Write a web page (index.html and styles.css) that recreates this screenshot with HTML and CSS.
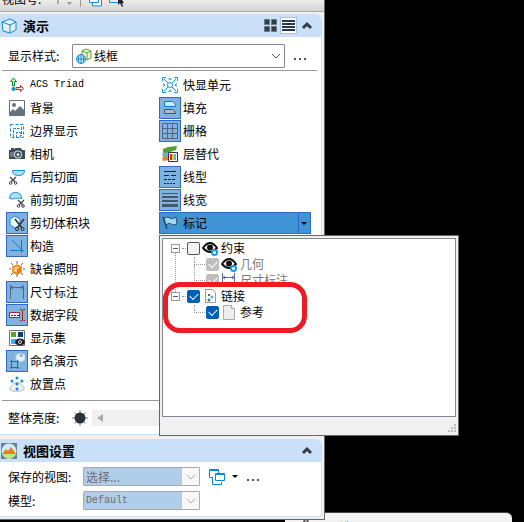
FILE: index.html
```
<!DOCTYPE html>
<html lang="zh-CN">
<head>
    <meta charset="UTF-8">
    <meta name="viewport" content="width=device-width, initial-scale=1.0">
    <title>视图属性</title>
    <link rel="stylesheet" href="styles.css">
</head>
<body>
    <div class="back-window">
        <svg class="icon" viewBox="0 0 16 16"><path d="M2 8L6 1M6 8L9 1" stroke="#555" stroke-width="2"/></svg>
        <span>显示选项</span>
    </div>

    <main class="window">
        <div class="toolbar">
            <span>视图号:</span>
            <svg class="spin" viewBox="0 0 28 12"><path d="M13 2v7" stroke="#999" stroke-width="1.500"/><path d="M22 7h5l-2.500 3z" fill="#999"/></svg>
            <i class="divider"></i>
            <svg class="icon" viewBox="0 0 16 16" fill="#eef7fd" stroke="#1a8fdd"><path d="M4.500 12v3h9v-9h-2"/><path d="M1.500 3.500h9v8h-9z"/></svg>
            <svg class="icon" viewBox="0 0 16 16"><path d="M1.500 3v8.500h9" fill="none" stroke="#1a8fdd"/><path d="M10 3v11l2-2 2 4 1-1-1-3h2z" fill="#222"/></svg>
        </div>

        <section class="panel">
            <header class="panel-head">
                <svg class="icon" viewBox="0 0 16 16" fill="#e4f2fd" stroke="#1787d4" stroke-linejoin="round"><path d="M1 4l8-3 6 3v8l-6 3-7-2z"/><path d="M1 4l8 3 6-3M9 7v8" fill="none"/></svg>
                <h2>演示</h2>
                <div class="head-tools">
                    <button class="mode" aria-label="网格"><svg viewBox="0 0 13 13" fill="#353c44" stroke="#667788"><path d="M.5.5h5v5h-5zM7.500.5h5v5h-5zM.5 7.500h5v5h-5zM7.500 7.500h5v5h-5z"/></svg></button>
                    <button class="mode active" aria-label="列表"><svg viewBox="0 0 13 13" fill="#26384c"><path d="M0 1h13v2H0zM0 4h13v2H0zM0 7h13v2H0zM0 10h13v2H0z"/></svg></button>
                    <button class="fold" aria-label="折叠"><svg viewBox="0 0 12 10"><path d="M2 7l4-4 4 4" fill="none" stroke="#343c46" stroke-width="3"/></svg></button>
                </div>
            </header>
            <div class="panel-body">
                <div class="style-row">
                    <label for="displayStyle">显示样式:</label>
                    <div class="combo">
                        <svg class="icon" viewBox="0 0 16 16" fill="none"><path d="M6 3l4-2 5 2v7l-4 2-5-2zM6 3l5 2 4-2M11 5v7" fill="#edf7e5" stroke="#5ba22c"/><circle cx="5" cy="11" r="4.500" fill="#dff1fc" stroke="#1683cc"/><path d="M.5 11h9M5 6.500v9M3 7.500q-1.500 3.500 0 7M7 7.500q1.500 3.500 0 7" stroke="#1683cc"/></svg>
                        <select id="displayStyle"><option>线框</option></select>
                        <svg class="chevron" viewBox="0 0 10 6"><path d="M1 1l4 4 4-4" fill="none" stroke="#555"/></svg>
                    </div>
                    <button class="more" aria-label="更多"><i></i><i></i><i></i></button>
                </div>

                <div class="options">
                    <div class="column">
                        <button class="toggle"><span class="tile"><svg class="icon" viewBox="0 0 16 16"><path d="M4.500 1L1.500 4.500h2V9h2V4.500h2z" fill="#d9f5d9" stroke="#0a9428"/><path d="M14.500 11.500L11.500 8.500v2H7v2h4.500v2z" fill="#fde0e0" stroke="#d41f2b"/><circle cx="4.500" cy="12" r="2" fill="#1a86d8"/></svg></span><span class="latin">ACS Triad</span></button>
                        <button class="toggle"><span class="tile"><svg class="icon" viewBox="0 0 16 16"><path d="M.5.5h15v15H.5z" fill="#fff" stroke="#64717e"/><path d="M1 12l3-3 2 2 5-5 4 4v5H1z" fill="#64717e"/><circle cx="5" cy="5" r="2" fill="#64717e"/></svg></span><span>背景</span></button>
                        <button class="toggle"><span class="tile"><svg class="icon" viewBox="0 0 16 16" fill="none" stroke="#168bdc"><path d="M1.500 1.500h13v13h-13z" stroke-dasharray="3 2"/><path d="M4.500 14V5.500h6M7.500 15V9.500h4V14M12.500 4v9" stroke-dasharray="3 1"/></svg></span><span>边界显示</span></button>
                        <button class="toggle"><span class="tile"><svg class="icon" viewBox="0 0 16 16"><path d="M0 4h5l1-2h6l1 2h3v9H0z" fill="#3c4956"/><path d="M2 2h3v2H2z" fill="#3c4956"/><path d="M1 6h4v5H1z" fill="#6b7a88"/><circle cx="9" cy="8.500" r="4" fill="#dae0e6"/><circle cx="9" cy="8.500" r="3" fill="#3c4956"/><circle cx="9" cy="8.500" r="1.500" fill="#dae0e6"/></svg></span><span>相机</span></button>
                        <button class="toggle"><span class="tile"><svg class="icon" viewBox="0 0 16 16"><path d="M3.500 1.500h12q0 5-6 5t-6-5z" fill="#aee0fb" stroke="#1692e0"/><path d="M1 8l6 6M7 8l-6 6" stroke="#444" stroke-width="1.300"/><circle cx="1.500" cy="14" r="1.300" fill="#fff" stroke="#444"/><circle cx="6.500" cy="14" r="1.300" fill="#fff" stroke="#444"/></svg></span><span>后剪切面</span></button>
                        <button class="toggle"><span class="tile"><svg class="icon" viewBox="0 0 16 16"><path d="M.5 6.500q0-6 6-6t6 6q-3-1-6 0t-6 0z" fill="#aee0fb" stroke="#1692e0"/><path d="M9 8l6 6M15 8l-6 6" stroke="#444" stroke-width="1.300"/><circle cx="9.500" cy="14" r="1.300" fill="#fff" stroke="#444"/><circle cx="14" cy="14" r="1.300" fill="#fff" stroke="#444"/></svg></span><span>前剪切面</span></button>
                        <button class="toggle on"><span class="tile"><svg class="icon" viewBox="0 0 16 16"><path d="M1 4l5-3 5 3v6l-5 3-5-3z" fill="#e5f5fe" stroke="#1692e0"/><path d="M6 4l7 9M15 4l-7 9" stroke="#333" stroke-width="1.500"/><circle cx="8" cy="14" r="1.500" fill="#99cccc" stroke="#222"/><circle cx="13.500" cy="14" r="1.500" fill="#99cccc" stroke="#222"/></svg></span><span>剪切体积块</span></button>
                        <button class="toggle on"><span class="tile"><svg class="icon" viewBox="0 0 16 16" fill="none" stroke="#087fd4"><path d="M1 12.500h14M12.500 2v13M3 2l9 9"/></svg></span><span>构造</span></button>
                        <button class="toggle"><span class="tile"><svg class="icon" viewBox="0 0 16 16"><path d="M8 0v3M8 13v3M0 8h2M14 8h2M2 2l2 2M14 2l-2 2M2 14l2-2M14 14l-2-2" stroke="#666"/><path d="M4 6l4-2 4 2v5l-4 2-4-2z" fill="#ffca87" stroke="#ef7d0b" stroke-width="1.500"/><path d="M8 8l4-2v5l-4 2z" fill="#ef7d0b"/></svg></span><span>缺省照明</span></button>
                        <button class="toggle on"><span class="tile"><svg class="icon" viewBox="0 0 16 16" fill="none" stroke="#52657a"><path d="M1.500 1v14M14.500 1v14M2 3.500h12M4 2L2 3.500 4 5M12 2l2 1.500L12 5"/></svg></span><span>尺寸标注</span></button>
                        <button class="toggle on"><span class="tile"><svg class="icon" viewBox="0 0 16 16"><path d="M.5 5.500h10v5H.5z" fill="#fff" stroke="#a3252b"/><path d="M2 8.500h8" stroke="#a00" stroke-dasharray="2 1"/><path d="M11 2.500h1.500l1 1 1-1H16M13.500 3v10M11 13.500h1.500l1-1 1 1H16" fill="none" stroke="#b11"/></svg></span><span>数据字段</span></button>
                        <button class="toggle"><span class="tile"><svg class="icon" viewBox="0 0 16 16"><path d="M.5.5h15v15H.5z" fill="#fff" stroke="#667777"/><path d="M2 2h5v5H2z" fill="#58a618"/><path d="M9 2h5v5H9z" fill="#00426d"/><path d="M2 9h5v5H2z" fill="#38afff"/><ellipse cx="11" cy="12" rx="5" ry="3.500" fill="#222"/><circle cx="11" cy="12" r="1.500" fill="#222" stroke="#ddd"/></svg></span><span>显示集</span></button>
                        <button class="toggle on"><span class="tile"><svg class="icon" viewBox="0 0 16 16"><path d="M7 2l4-2 5 2v5l-4 2-5-2z" fill="#e7eff5" stroke="#b8ccdb"/><circle cx="12" cy="2.500" r="1.500" fill="#62b6ec"/><path d="M2.500 7v9M8.500 7v9M1 8.500h9M1 14.500h9" stroke="#0878cf"/></svg></span><span>命名演示</span></button>
                        <button class="toggle"><span class="tile"><svg class="icon" viewBox="0 0 16 16"><path d="M1 12l4-5 5-1 5 5v3l-8 2-6-2z" fill="#edf0f2" stroke="#b9c1c8"/><g fill="#148be0"><circle cx="8" cy="2" r="1.500"/><circle cx="3" cy="5" r="1.500"/><circle cx="13" cy="5" r="1.500"/><circle cx="8" cy="8" r="1.500"/><circle cx="8" cy="13" r="1.500"/></g></svg></span><span>放置点</span></button>
                    </div>

                    <div class="column">
                        <button class="toggle"><span class="tile"><svg class="icon" viewBox="0 0 16 16" fill="none" stroke="#1595da"><path d="M.5 4V.5H4M12 .5h3.500V4M.5 12v3.500H4M12 15.500h3.500V12M2 2l4 4M14 2l-4 4M2 14l4-4M14 14l-4-4M6.500 1L8 3l1.500-2M6.500 15L8 13l1.500 2M1 6.500L3 8 1 9.500M15 6.500L13 8l2 1.500"/><circle cx="8" cy="8" r="2.500"/></svg></span><span>快显单元</span></button>
                        <button class="toggle on"><span class="tile"><svg class="icon" viewBox="0 0 16 16"><path d="M2.500 1.500h8q3 1 3 5h-11z" fill="#cbe9fd" stroke="#087fd4"/><path d="M2.500 9.500h8q3 1 3 4h-11z" fill="#a5bdce" stroke="#45586b"/></svg></span><span>填充</span></button>
                        <button class="toggle on"><span class="tile"><svg class="icon" viewBox="0 0 16 16" fill="none" stroke="#52657a"><path d="M.5.5h15v15H.5zM5.500 0v16M10.500 0v16M0 5.500h16M0 10.500h16"/></svg></span><span>栅格</span></button>
                        <button class="toggle"><span class="tile"><svg class="icon" viewBox="0 0 16 16"><path d="M0 12l5-4 8 1-4 5-8 1z" fill="#e0852b"/><path d="M0 8l5-3 9 1-5 4-8 1z" fill="#77aacc"/><path d="M1 3l5-2 9-1-1 4-7 2-6 1z" fill="#50a02e"/><path d="M6.500 6.500h9v9h-9z" fill="#fff" stroke="#333"/><path d="M8 8h2v6H8z" fill="#e22"/><path d="M10 8h2v6h-2z" fill="#fc3"/><path d="M12 8h2v6h-2z" fill="#5bc"/></svg></span><span>层替代</span></button>
                        <button class="toggle on"><span class="tile"><svg class="icon" viewBox="0 0 16 16" fill="none" stroke="#222"><path d="M2 2.500h12"/><path d="M2 6.500h12" stroke-dasharray="5 2"/><path d="M2 10.500h12" stroke-dasharray="3 1"/><path d="M2 14.500h12" stroke-dasharray="2 1"/></svg></span><span>线型</span></button>
                        <button class="toggle on"><span class="tile"><svg class="icon" viewBox="0 0 16 16" fill="#45586b"><path d="M0 1h16v1H0zM0 4h16v2H0zM0 8h16v2H0zM0 12h16v3H0z"/></svg></span><span>线宽</span></button>
                        <div class="marker">
                            <button class="toggle open"><span class="tile"><svg class="icon" viewBox="0 0 16 16"><path d="M1 2l4 12" stroke="#444" stroke-width="1.500"/><path d="M2 3q4-2 6 0t6-1l1 7q-4 2-6 0t-5 1z" fill="#a2d7f4" stroke="#24516e"/></svg></span><span>标记</span></button>
                            <button class="drop" aria-label="展开"></button>

                            <div class="popup">
                                <ul class="tree">
                                    <li><i class="expander"></i><input type="checkbox" id="constraint"><svg class="icon" viewBox="0 0 16 16"><path d="M1 8q7-10 14 0-7 8-14 0z" fill="#fff" stroke="#111" stroke-width="2"/><circle cx="8" cy="7.500" r="3" fill="#111"/><circle cx="12.500" cy="12.500" r="2.500" fill="#fff" stroke="#149be8" stroke-width="2"/></svg><label for="constraint">约束</label>
                                        <ul>
                                            <li><input type="checkbox" id="geometry" checked disabled><svg class="icon" viewBox="0 0 16 16"><path d="M1 8q7-10 14 0-7 8-14 0z" fill="#fff" stroke="#111" stroke-width="2"/><circle cx="8" cy="7.500" r="3" fill="#111"/><circle cx="12.500" cy="12.500" r="2.500" fill="#fff" stroke="#149be8" stroke-width="2"/></svg><label for="geometry">几何</label></li>
                                            <li><input type="checkbox" id="dimension" checked disabled><svg class="icon" viewBox="0 0 16 16" fill="none" stroke="#596d9e"><path d="M1.500 1v14M13.500 1v14M2 5.500h11M4 4L2 5.500 4 7M11 4l2 1.500L11 7"/></svg><label for="dimension">尺寸标注</label></li>
                                        </ul>
                                    </li>
                                    <li class="outlined"><i class="expander"></i><input type="checkbox" id="link" checked><svg class="icon" viewBox="0 0 16 16"><path d="M3.500 1.500h7l3 3v10h-10z" fill="#fff" stroke="#999"/><circle cx="7" cy="7" r="1" fill="#333"/><circle cx="10" cy="9" r="1.500" fill="#58aee5"/><circle cx="7" cy="12" r="1.500" fill="#447799"/></svg><label for="link">链接</label>
                                        <ul>
                                            <li><input type="checkbox" id="reference" checked><svg class="icon" viewBox="0 0 16 16"><path d="M2.500 1.500h8l3 3v11h-11z" fill="#eee" stroke="#aaa"/><path d="M10.500 1.500v3h3" fill="#fff" stroke="#aaa"/></svg><label for="reference">参考</label></li>
                                        </ul>
                                    </li>
                                </ul>
                                <svg class="grip" viewBox="0 0 8 8" fill="#bbb"><path d="M6 0h2v2H6zM3 3h2v2H3zM6 3h2v2H6zM0 6h2v2H0zM3 6h2v2H3zM6 6h2v2H6z"/></svg>
                            </div>
                        </div>
                    </div>
                </div>

                <div class="brightness">
                    <label for="brightness">整体亮度:</label>
                    <svg class="icon" viewBox="0 0 16 16"><path d="M8 0v16M0 8h16M2.500 2.500l11 11M13.500 2.500l-11 11" stroke="#777"/><circle cx="8" cy="8" r="5.500" fill="#293138"/></svg>
                    <div class="slider">
                        <svg viewBox="0 0 6 8"><path d="M6 0v8L0 4z" fill="#aaa"/></svg>
                        <input type="range" id="brightness" disabled>
                    </div>
                </div>
            </div>
        </section>

        <section class="panel">
            <header class="panel-head">
                <svg class="icon" viewBox="0 0 16 16"><path d="M0 0h16v16H0z" fill="#70818d"/><circle cx="8" cy="8" r="7.500" fill="#cfeafa"/><path d="M1 11l4-5 2 2 3-4 5 7z" fill="#ef7d12"/><path d="M1 11h14q-3 5-7 5t-7-5z" fill="#b9e58d"/></svg>
                <h2>视图设置</h2>
                <div class="head-tools">
                    <button class="fold" aria-label="折叠"><svg viewBox="0 0 12 10"><path d="M2 7l4-4 4 4" fill="none" stroke="#343c46" stroke-width="3"/></svg></button>
                </div>
            </header>
            <div class="panel-body settings">
                <div class="setting">
                    <label for="savedView">保存的视图:</label>
                    <div class="combo disabled">
                        <select id="savedView" disabled><option>选择...</option></select>
                        <svg class="chevron" viewBox="0 0 10 6"><path d="M1 1l4 4 4-4" fill="none" stroke="#aaa"/></svg>
                    </div>
                    <button class="views" aria-label="视图"><svg class="icon" viewBox="0 0 16 16" fill="none" stroke="#0c86d9"><path d="M4 8.500H.5v-8h9V4M.5 1.500h9M3.500 9v6.500h9V13"/><path d="M6.500 4.500h9v7h-9zM6.500 5.500h9"/></svg><i class="arrow"></i></button>
                    <button class="more" aria-label="更多"><i></i><i></i><i></i></button>
                </div>
                <div class="setting">
                    <label for="model">模型:</label>
                    <div class="combo disabled">
                        <select id="model" class="latin" disabled><option>Default</option></select>
                        <svg class="chevron" viewBox="0 0 10 6"><path d="M1 1l4 4 4-4" fill="none" stroke="#aaa"/></svg>
                    </div>
                </div>
            </div>
        </section>
    </main>
</body>
</html>
```
FILE: styles.css
```
*, *::before, *::after {
    box-sizing: border-box;
}

body {
    margin: 0;
    min-height: 100vh;
    background: #000;
    color: #000;
    font-family: "Noto Sans CJK SC", sans-serif;
    font-size: 12px;
    line-height: 16px;
    overflow: hidden;
}

button, select {
    margin: 0;
    padding: 0;
    border: none;
    background: none;
    color: inherit;
    font: inherit;
}

svg {
    display: block;
    flex: none;
}

.icon {
    width: 16px;
    height: 16px;
}

.latin {
    font-family: "Liberation Mono", monospace;
    font-size: 10px;
}

/* windows */
.window {
    position: relative;
    width: 62%;
    background: #f0f0f0;
    border-right: 1px solid #666;
    border-bottom: 1px solid #666;
    padding: 0 2px 2px 0;
}

.back-window {
    position: absolute;
    right: 12px;
    bottom: 0;
    width: 227px;
    height: 10px;
    padding: 6px 0 0 14px;
    display: flex;
    gap: 1px;
    background: #f3f3f3;
    border-top: 1px solid #444;
    border-radius: 0 6px 0 0;
    color: #666;
    overflow: hidden;
}

.toolbar {
    display: flex;
    align-items: flex-end;
    gap: 4px;
    height: 12px;
    margin: 0 -2px 2px 0;
    padding: 0 2px 4px;
    overflow: hidden;
    background: linear-gradient(#ececec, #d4d4d4);
    border-bottom: 1px solid #aaa;
}

.spin {
    width: 28px;
    height: 12px;
}

.divider {
    width: 1px;
    height: 12px;
    margin: 0 3px;
    background: #999;
}

/* panels */
.panel {
    background: #fff;
    border: solid #cadff8;
    border-width: 0 1px 1px 0;
    border-radius: 0 6px 4px 0;
    margin-bottom: 4px;
}

.panel:last-child {
    margin-bottom: 0;
}

.panel-head {
    display: flex;
    align-items: center;
    gap: 6px;
    height: 23px;
    padding: 0 8px 0 1px;
    background: #cadff8;
    border-radius: 0 6px 0 0;
}

h2 {
    margin: 0;
    font-size: 13px;
}

.head-tools {
    display: flex;
    align-items: center;
    gap: 1px;
    margin-left: auto;
}

.mode {
    padding: 1px;
    border: 1px solid transparent;
}

.mode svg {
    width: 13px;
    height: 13px;
}

.mode.active {
    background: #fff;
    border-color: #a9c0dc;
}

.fold {
    margin-left: 3px;
}

.fold svg {
    width: 12px;
    height: 10px;
}

.panel-body {
    padding: 7px 4px 8px 2px;
}

/* combos */
.style-row {
    display: flex;
    align-items: center;
    padding: 0 0 2px 6px;
    border-bottom: 1px solid #999;
}

.style-row label {
    width: 64px;
}

.combo {
    position: relative;
    display: flex;
    align-items: center;
    flex: 1;
    height: 24px;
    padding-left: 3px;
    border: 1px solid #888;
    border-radius: 1px;
    background: #fff;
}

.combo select {
    appearance: none;
    flex: 1;
    height: 100%;
    padding-left: 2px;
}

.chevron {
    position: absolute;
    right: 3px;
    width: 10px;
    height: 6px;
}

.more {
    display: flex;
    gap: 3px;
    padding: 6px 11px 0 9px;
}

.more i {
    width: 2px;
    height: 2px;
    background: #555;
}

/* display options */
.options {
    display: grid;
    grid-template-columns: 153px 1fr;
    padding: 3px 6px 5px 4px;
    border-bottom: 1px solid #999;
}

.column {
    display: flex;
    flex-direction: column;
    gap: 1px;
}

.toggle {
    display: flex;
    align-items: center;
    gap: 2px;
    height: 22px;
    text-align: left;
}

.tile {
    padding: 2px;
    border: 1px solid transparent;
}

.on .tile {
    background: #7fb2df;
    border-color: #316ac5;
}

.marker {
    position: relative;
    display: flex;
    height: 22px;
    background: #3e94d4;
    border: 1px solid #316ac5;
}

.open {
    flex: 1;
    margin: -1px 0 0 -1px;
}

.drop {
    width: 12px;
    border-left: 1px solid #316ac5;
}

.drop::after,
.arrow {
    content: "";
    display: block;
    width: 0;
    margin: auto;
    border: 3px solid transparent;
    border-top-color: #000;
    border-bottom: none;
}

/* marker popup */
.popup {
    position: absolute;
    top: 22px;
    left: -1px;
    z-index: 1;
    width: 300px;
    padding: 2px;
    background: #f0f0f0;
    border: 1px solid #666;
}

.tree {
    height: 179px;
    padding: 1px 8px;
    background: #fff;
    border: 1px solid #828790;
}

.tree, .tree ul {
    margin: 0;
    list-style: none;
}

.tree li {
    position: relative;
    display: flex;
    flex-wrap: wrap;
    align-items: center;
    column-gap: 2px;
}

.tree ul {
    width: 100%;
    padding-left: 35px;
}

.tree label {
    padding-left: 1px;
}

.tree input {
    appearance: none;
    width: 13px;
    height: 13px;
    margin: 0;
    border: 1px solid #555;
    border-radius: 2px;
    background: #f3f3f3;
}

.tree input:checked {
    background: #005fb8;
    border-color: #005fb8;
}

.tree input:checked::before {
    content: "";
    display: block;
    width: 8px;
    height: 5px;
    margin: 2px;
    border: solid #fff;
    border-width: 0 0 1px 1px;
    transform: rotate(-45deg);
}

.tree input:disabled {
    background: #bfbfbf;
    border-color: #bfbfbf;
}

.tree input:disabled ~ label {
    color: #777;
}

.expander {
    width: 9px;
    height: 9px;
    margin-right: 5px;
    border: 1px solid #999;
    background: linear-gradient(#4060a0, #4060a0) center / 5px 1px no-repeat #fff;
}

/* dotted guide lines */
.tree > li::before {
    content: "";
    position: absolute;
    top: 8px;
    left: 11px;
    width: 4px;
    border-top: 1px dotted #999;
}

.tree > li:first-child::after {
    content: "";
    position: absolute;
    top: 13px;
    bottom: -4px;
    left: 4px;
    border-left: 1px dotted #999;
}

.tree ul li::before {
    content: "";
    position: absolute;
    top: -7px;
    left: -12px;
    width: 11px;
    height: 16px;
    border: dotted #999;
    border-width: 0 0 1px 1px;
}

.tree ul li:first-child::before {
    top: 1px;
    height: 8px;
}

.outlined::after {
    content: "";
    position: absolute;
    top: -6px;
    left: -8px;
    width: 144px;
    height: 51px;
    border: 5px solid #ed1c24;
    border-radius: 17px;
    pointer-events: none;
}

.grip {
    width: 8px;
    height: 8px;
    margin: 7px 0 1px auto;
}

.brightness {
    display: flex;
    align-items: center;
    padding: 9px 5px 0 6px;
}

.brightness label {
    width: 64px;
}

.slider {
    display: flex;
    align-items: center;
    flex: 1;
    height: 16px;
    margin-left: 4px;
    padding-left: 5px;
    background: #f0f0f0;
}

.slider svg {
    width: 6px;
    height: 8px;
}

.slider input {
    appearance: none;
    flex: 1;
    min-width: 0;
    background: none;
}

/* view settings */
.settings {
    display: flex;
    flex-direction: column;
    gap: 5px;
    padding: 5px 8px 6px;
}

.setting {
    display: flex;
    align-items: center;
    height: 19px;
}

.setting label {
    width: 75px;
}

.combo.disabled {
    flex: none;
    width: 117px;
    height: 19px;
    padding: 0;
    border-color: #aaa;
    background: linear-gradient(to left, #f8f8f8 17px, #b0cdea 17px);
    color: #6d6d6d;
}

.combo.disabled select {
    opacity: 1;
}

.views {
    display: flex;
    align-items: center;
    gap: 7px;
    margin-left: 9px;
}
```
